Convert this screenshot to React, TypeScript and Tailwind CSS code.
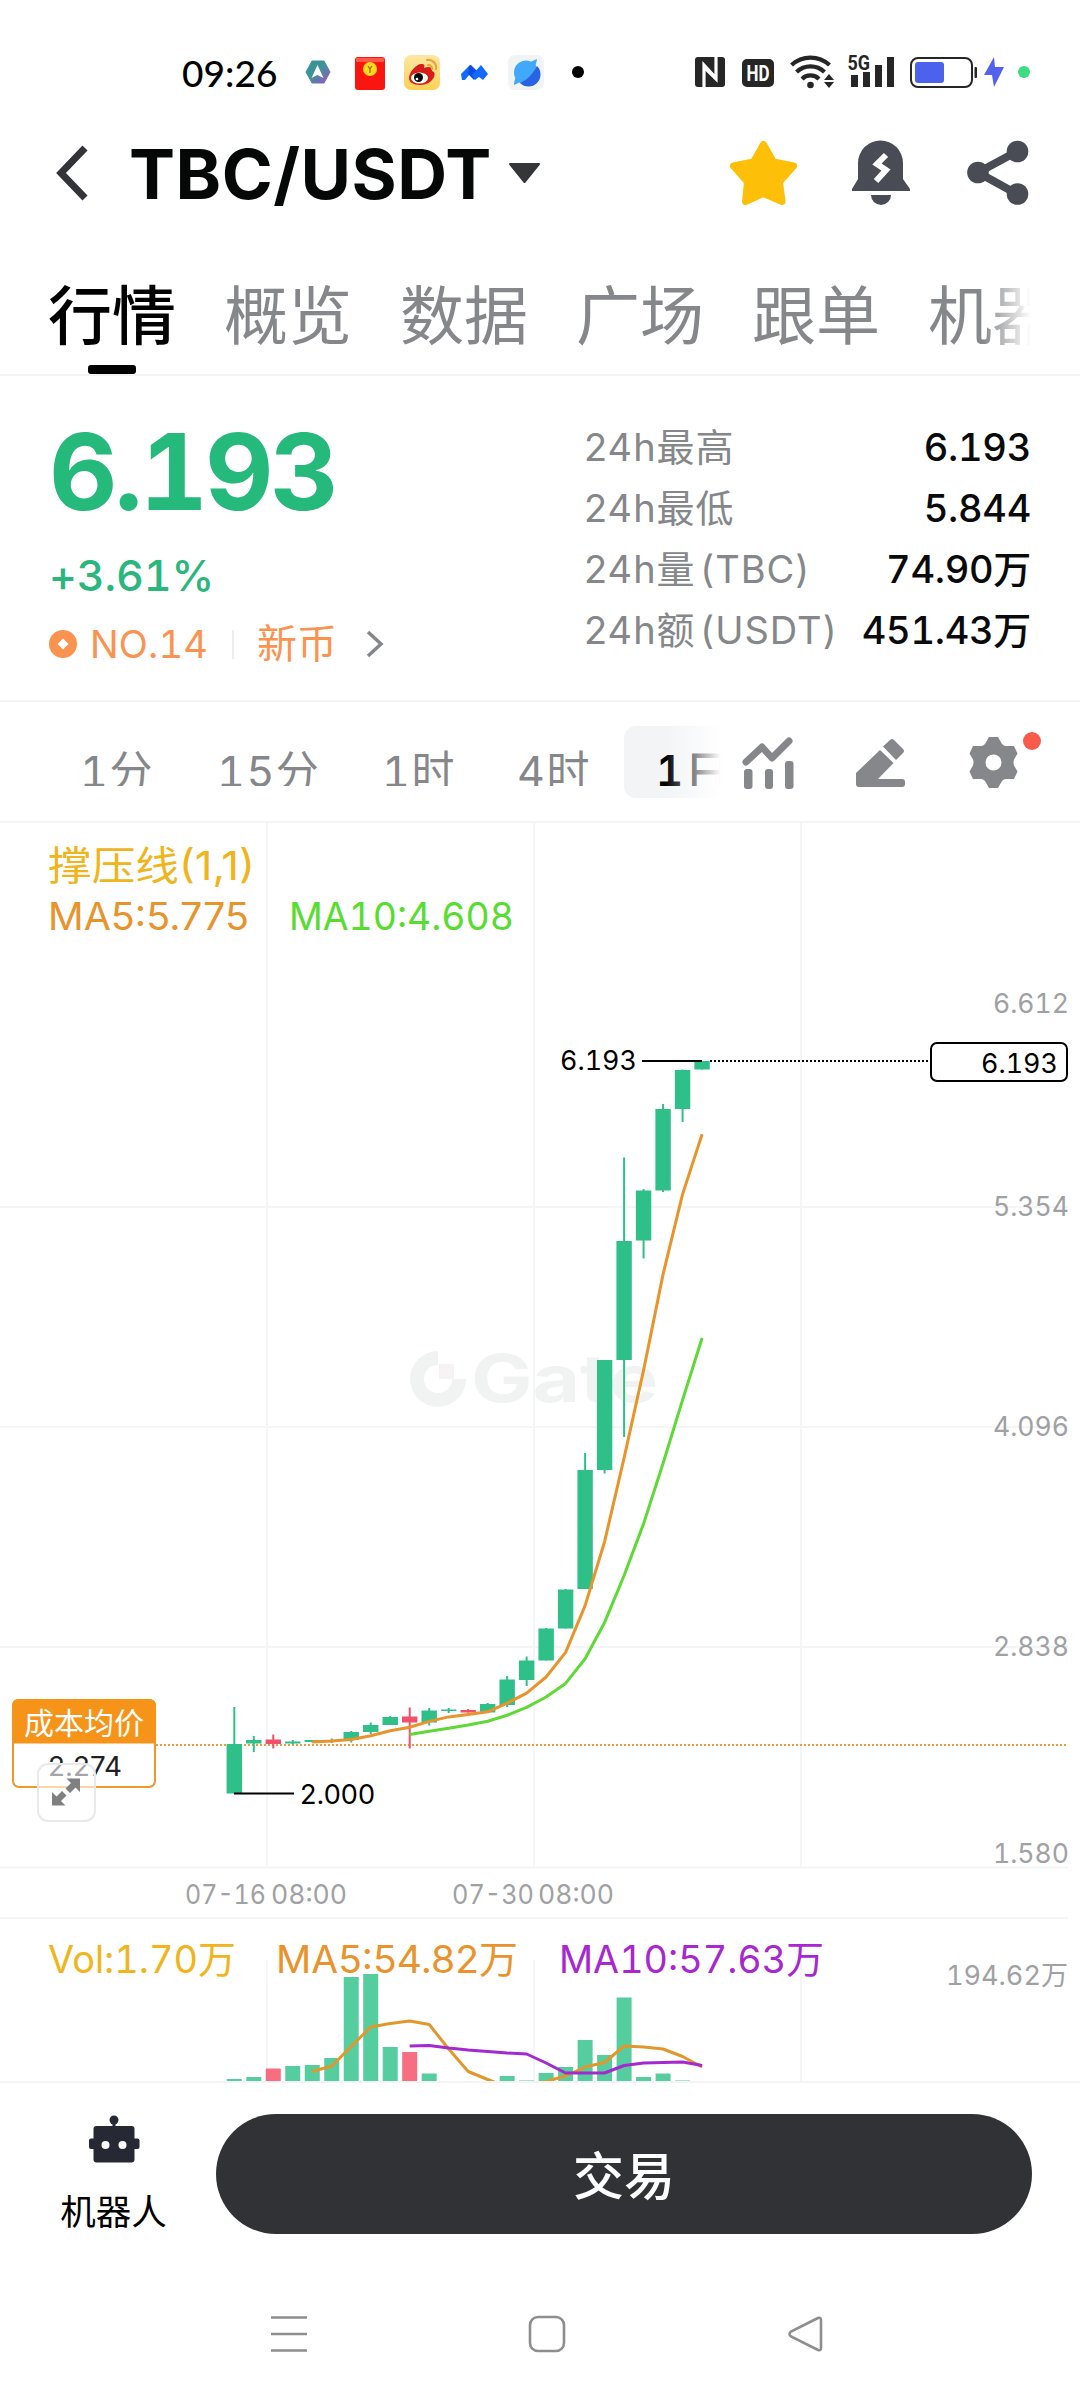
type Candle = [high: number, top: number, bottom: number, low: number, down?: boolean]

const tabs = ['行情', '概览', '数据', '广场', '跟单', '机器人']

const stats = [
  { label: '24h最高', value: '6.193' },
  { label: '24h最低', value: '5.844' },
  { label: '24h量 (TBC)', value: '74.90万' },
  { label: '24h额 (USDT)', value: '451.43万' },
]

const candles: Candle[] = [
  [1707, 1744, 1793.5, 1793.5],
  [1736, 1740, 1743.5, 1752],
  [1734.5, 1739.5, 1744, 1748.5, true],
  [1740, 1741.5, 1743.5, 1744.5],
  [1740, 1740, 1742, 1742.5],
  [1738.5, 1740, 1741.5, 1743],
  [1731, 1732, 1740, 1742.5],
  [1722.5, 1725, 1732, 1734],
  [1716, 1717, 1725, 1725],
  [1707.5, 1716.5, 1722.5, 1748.5, true],
  [1708, 1710.5, 1722.5, 1725.5],
  [1708, 1709.5, 1711, 1713],
  [1709, 1710, 1712.5, 1712.5, true],
  [1703, 1704, 1712.5, 1713],
  [1676, 1679.5, 1705, 1707],
  [1656.5, 1660.5, 1680, 1686],
  [1628, 1628.5, 1660.5, 1660.5],
  [1589, 1589.5, 1628.5, 1628.5],
  [1453, 1470, 1589, 1589],
  [1360, 1360, 1470, 1473.5],
  [1157.5, 1241, 1360, 1437],
  [1189, 1190.5, 1240.5, 1258.5],
  [1104, 1109, 1190.5, 1192],
  [1069.5, 1070, 1109, 1122],
  [1061, 1061, 1069.5, 1069.5],
]

const volumes = [
  2079, 2077, 2068.5, 2066, 2065, 2058, 1977, 1974, 2047, 2052, 2073.5, 2083, 2083, 2083, 2076, 2080.5, 2073, 2067,
  2040, 2055, 1997.5, 2077, 2073.5, 2080.5, 2083,
]
const volMa5 = [
  2071.5, 2066, 2046.5, 2027, 2023.5, 2021, 2024.5, 2049, 2071.5, 2079.5, 2087, 2085, 2081.5, 2076, 2067, 2062.5, 2046,
  2047, 2049, 2056.5, 2067,
]
const volMa10 = [
  2046, 2045.5, 2048, 2050, 2051.5, 2053, 2054, 2063, 2073, 2073, 2073, 2065.5, 2063, 2062.5, 2062, 2065.5,
]

const cx = (i: number) => 234.3 + i * 19.49

const closes = candles.map(([, top, bottom, , down]) => (down ? bottom : top))

const movingAverage = (n: number) =>
  closes.slice(n - 1).map((_, i) => closes.slice(i, i + n).reduce((a, b) => a + b, 0) / n)

const toPoints = (ys: number[], start: number) => ys.map((y, i) => `${cx(i + start).toFixed(1)},${y}`).join(' ')

function StatusBar() {
  return (
    <div className="flex h-[112px] items-center pt-8 pl-[182px] pr-[50px]">
      <span className="w-[122px] font-[Lato] text-[37px] leading-none font-medium tracking-[0.1px] text-black">09:26</span>
      <svg width="284" height="40" viewBox="304 52 284 40">
        <defs>
          <linearGradient id="hex" x1="0" y1="0" x2="1" y2="1">
            <stop offset="0.45" stopColor="#3b9598" />
            <stop offset="1" stopColor="#a04fc4" />
          </linearGradient>
          <linearGradient id="wb" x1="0" y1="0" x2="0" y2="1">
            <stop offset="0" stopColor="#fde7a6" />
            <stop offset="1" stopColor="#fbd253" />
          </linearGradient>
        </defs>
        <path d="M312 61h12l6 11-6 11h-12l-6-11z" fill="url(#hex)" stroke="url(#hex)" strokeLinejoin="round" />
        <path d="M317.500 65l6 13-6-3-6 3z" fill="#fff" />
        <rect x="355" y="57" width="30" height="33" rx="3" fill="#fb1510" />
        <rect x="356" y="58" width="28" height="4" rx="1" fill="#f9594b" />
        <circle cx="370" cy="69" r="7" fill="#ffdb1c" />
        <path d="M368 66l2 3 2-3M370 69v4" stroke="#a06b00" strokeWidth="1.300" fill="none" />
        <rect x="404" y="55" width="36" height="35" rx="7" fill="url(#wb)" />
        <path d="M409 78c0-6 8-15 13-14 2 0 3 1 2 4 5-2 9-1 8 3 3 1 3 3 2 6-2 5-8 8-14 8-7 0-11-3-11-7z" fill="#d71c1a" />
        <ellipse cx="419.500" cy="78" rx="8.500" ry="5.500" fill="#fff" />
        <circle cx="418.500" cy="77.500" r="4.500" fill="#0b0b0b" />
        <circle cx="417" cy="79" r="1.300" fill="#fff" />
        <path d="M427 60c6-1 10 4 9 9M428 65c3 0 4 1 4 4" stroke="#eaa53a" strokeWidth="2.200" fill="none" strokeLinecap="round" />
        <path d="M461 74l9-9 4 4-9 11h-3z" fill="#1467ff" />
        <path d="M469 66l2-1 8 8-5 7-6-6z" fill="#0c4fe0" />
        <path d="M472 75l9-10 7 9-5 6-4-3-4 3z" fill="#1467ff" />
        <rect x="508" y="55" width="36" height="35" rx="7" fill="#f2f3f5" />
        <circle cx="526" cy="72.500" r="12" fill="#41a9fb" />
        <path d="M537 66a12 12 0 0 1-17 17c7-3 13-9 17-17z" fill="#2763e3" />
        <path d="M514 85c0-6 4-15 12-21l11-5-1 5c-3 9-10 16-22 21z" fill="#41a9fb" />
        <circle cx="578" cy="72" r="6" fill="#000" />
      </svg>
      <svg className="ml-auto" width="346" height="40" viewBox="684 52 346 40">
        <rect x="695" y="57" width="30" height="30" rx="3" fill="#262626" />
        <path d="M704 87V65l11 12M716 57v22l-11-11" fill="none" stroke="#fff" strokeWidth="3.200" />
        <rect x="742" y="59" width="32" height="28" rx="5" fill="#262626" />
        <text x="746.500" y="81" textLength="23" lengthAdjust="spacingAndGlyphs" className="fill-white font-[Roboto] text-[22px] font-bold">
          HD
        </text>
        <g fill="none" stroke="#262626" strokeWidth="4.200">
          <path d="M791.500 65a28 28 0 0 1 38 0M796.500 72a20 20 0 0 1 28 0M802 79a12 12 0 0 1 17 0" />
        </g>
        <circle cx="810.500" cy="85" r="3.300" fill="#262626" />
        <path d="M829 74l5 6h-10zM829 88l5-6h-10z" fill="#262626" />
        <text x="847.500" y="70" textLength="22.500" lengthAdjust="spacingAndGlyphs" className="fill-[#262626] font-[Roboto] text-[21px] font-bold">
          5G
        </text>
        <path d="M851 75h7v12h-7zM863 72h7v15h-7zM875 65h7v22h-7zM887 57h7v30h-7z" fill="#262626" />
        <rect x="911" y="58" width="61" height="29" rx="7" fill="none" stroke="#262626" strokeWidth="2" />
        <rect x="915" y="62" width="29" height="21" rx="3" fill="#4c61ee" />
        <rect x="974.500" y="67" width="2.500" height="11" rx="1" fill="#262626" />
        <path d="M994 57l-10 18h8l2 12 10-20h-9z" fill="#5461ee" />
        <circle cx="1024" cy="72" r="6" fill="#3ddc84" />
      </svg>
    </div>
  )
}

function Header() {
  return (
    <header className="flex h-[122px] items-center pl-[54px] pr-[50px]">
      <svg width="36" height="60" viewBox="0 0 36 60">
        <path d="M31 5L7 30l24 25" fill="none" stroke="#333438" strokeWidth="7" />
      </svg>
      <h1 className="mt-[2px] ml-[39px] text-[69px] leading-none font-bold tracking-[0.5px] whitespace-nowrap text-[#060808]">TBC/USDT</h1>
      <svg className="ml-4" width="34" height="24" viewBox="0 0 34 24">
        <path d="M2 3h29L16.500 21z" fill="#35363a" stroke="#35363a" strokeWidth="2" strokeLinejoin="round" />
      </svg>
      <svg className="ml-auto" width="302" height="70" viewBox="728 138 302 70">
        <path
          d="M763.500 144.500l10 17.500 20 4-14 16 2.500 19.500-18.500-8-18 8 2-19.500-14-16 20-4z"
          fill="#fdbf07"
          stroke="#fdbf07"
          strokeWidth="7"
          strokeLinejoin="round"
        />
        <path d="M858 163a22.500 22.500 0 0 1 45 0v16l7 10v2h-58v-2l6-10z" fill="#4a4c55" />
        <path d="M871 195h20a10 10 0 0 1-20 0z" fill="#4a4c55" />
        <path d="M886 155l-9 9 9 6-10 11" fill="none" stroke="#fff" strokeWidth="6" />
        <path d="M1017 151.500l-39 21 39 21.500" fill="none" stroke="#4a4c55" strokeWidth="8" />
        <circle cx="1017.500" cy="151.500" r="10.800" fill="#4a4c55" />
        <circle cx="978" cy="172.500" r="10.800" fill="#4a4c55" />
        <circle cx="1017.500" cy="194" r="10.800" fill="#4a4c55" />
      </svg>
    </header>
  )
}

function Tabs() {
  return (
    <nav className="h-[142px] border-b-2 border-[#f4f4f5] pr-[49px] pl-12">
      <div className="relative flex h-[140px] gap-12 overflow-hidden pt-[45px] text-[64px] leading-[74px] whitespace-nowrap text-[#85878a]">
        {tabs.map((tab, i) => (
          <div key={tab} className={i === 0 ? 'flex flex-col items-center font-medium text-black' : 'font-normal'}>
            {tab}
            {i === 0 && <span className="mt-3 h-[9px] w-12 rounded-[3px] bg-black" />}
          </div>
        ))}
        <div className="absolute top-0 right-0 h-full w-12 bg-gradient-to-r from-transparent to-white" />
      </div>
    </nav>
  )
}

function Quote() {
  return (
    <section className="flex h-[326px] justify-between border-b-2 border-[#f4f4f5] pt-[41px] pr-[49px] pl-[49px]">
      <div className="pt-px">
        <div className="text-[106px] leading-[108px] font-bold tracking-[-3.2px] tabular-nums text-[#25b97c]">6.193</div>
        <div className="mt-[23px] text-[43px] leading-[52px] font-medium tracking-[-0.1px] tabular-nums text-[#2bb67d]">+3.61%</div>
        <div className="mt-[20px] flex h-[46px] items-center text-[#fb9350]">
          <svg width="28" height="28" viewBox="0 0 28 28">
            <circle cx="14" cy="14" r="14" fill="#fb9350" />
            <path d="M14 8.500l5.500 5.500-5.500 5.500L8.500 14z" fill="#fff" />
          </svg>
          <span className="ml-[13px] w-[142px] text-[38px] tracking-[0.2px] tabular-nums">NO.14</span>
          <span className="h-[29px] w-[2px] bg-[#eeeeee]" />
          <span className="ml-[23px] text-[40px]">新币</span>
          <svg className="ml-[28px]" width="20" height="30" viewBox="0 0 20 30">
            <path d="M3 3l13 12L3 27" fill="none" stroke="#85878a" strokeWidth="3.500" />
          </svg>
        </div>
      </div>
      <dl className="w-[447px] text-[38px] leading-[61px] whitespace-nowrap">
        {stats.map(s => (
          <div key={s.label} className="flex h-[61px] justify-between">
            <dt className="tracking-[1px] text-[#85878a] [word-spacing:-7px]">{s.label}</dt>
            <dd className="font-medium tracking-[-0.3px] tabular-nums text-[#0a0a0a]">{s.value}</dd>
          </div>
        ))}
      </dl>
    </section>
  )
}

function Intervals() {
  return (
    <section className="flex h-[121px] border-b-2 border-[#f4f4f5] text-[43px] text-[#85878a] tabular-nums">
      <div className="relative flex h-[98px] w-[721px] overflow-hidden pt-[24px] whitespace-nowrap">
        <div className="flex h-[60px] w-[624px] shrink-0 overflow-hidden leading-[91px] tracking-[1.5px]">
          <span className="ml-[80px] w-[137px]">1分</span>
          <span className="w-[165px]">15分</span>
          <span className="w-[135px]">1时</span>
          <span>4时</span>
        </div>
        <div className="h-[72px] w-[130px] shrink-0 rounded-xl bg-[#f2f4f6]">
          <div className="flex h-[60px] overflow-hidden pl-[32px] text-black">
            <span className="w-[28px] text-[42px] leading-[90px] font-semibold">1</span>
            <span className="text-[48px] leading-[96px] font-medium">日</span>
          </div>
        </div>
        <div className="absolute top-0 right-0 h-full w-[56px] bg-gradient-to-r from-transparent to-white" />
      </div>
      <svg width="359" height="100" viewBox="721 702 359 100" fill="#85878a">
        <path d="M746 762l16-15 10 11 17-17" fill="none" stroke="#85878a" strokeWidth="7" strokeLinecap="round" strokeLinejoin="round" />
        <rect x="744" y="769" width="8.500" height="20" rx="3" />
        <rect x="765" y="769" width="8" height="20" rx="3" />
        <rect x="785" y="761" width="8.500" height="28" rx="3" />
        <path d="M880 750l13.500 13L878 779h24a3 3 0 0 1 3 3v2a3 3 0 0 1-3 3h-43a3 3 0 0 1-3-3v-11z" />
        <path d="M883 746.500l7-6.500q2-2 4 0l9 9q2 2 0 4l-7 7z" />
        <path
          fillRule="evenodd"
          d="M989 737h9l4 7q2 2.500 5 2h7l3.500 7.500-3.500 6q-1 3 0 6l3.500 6-3.500 7.500h-7q-3-.5-5 2l-4 7h-9l-4-7q-2-2.500-5-2h-7l-3.500-7.500 3.500-6q1-3 0-6l-3.500-6 3.500-7.500h7q3 .5 5-2zM993.500 754.500a8 8 0 1 0 0 16 8 8 0 1 0 0-16z"
        />
        <circle cx="1032" cy="741" r="9" fill="#f85a4c" />
      </svg>
    </section>
  )
}

interface LabelProps {
  x: number
  y: number
  w: number
  cls: string
  children: string
}

function Label({ x, y, w, cls, children }: LabelProps) {
  return (
    <text x={x} y={y} textLength={w} lengthAdjust="spacingAndGlyphs" className={cls}>
      {children}
    </text>
  )
}

function Chart() {
  const axis = 'text-[27px] tabular-nums fill-[#9fa1a4]'
  return (
    <svg className="block" width="1080" height="1258" viewBox="0 823 1080 1258">
      <g stroke="#f4f5f5" strokeWidth="2">
        <path d="M267 823V1867M534 823V1867M801 823V1867M267 1960V2081M534 1960V2081M801 1960V2081" />
        <path d="M0 1207H1068M0 1427H1068M0 1647H1068M0 1867.500H1068M0 1918H1068" />
      </g>

      {/* Watermark */}
      <path d="M438 1351a28 28 0 1 0 28 28h-14a14 14 0 1 1-14-14z" fill="#f1f3f3" />
      <rect x="439" y="1364" width="15" height="15" fill="#f5f3f3" />
      <Label x={471} y={1402} w={187} cls="text-[66px] font-bold fill-[#f1f3f3]">Gate</Label>

      <Label x={48} y={880} w={207} cls="text-[40px] fill-[#f0b41c]">撑压线(1,1)</Label>
      <Label x={48} y={930} w={201} cls="text-[38px] fill-[#e9932c]">MA5:5.775</Label>
      <Label x={289} y={930} w={225} cls="text-[38px] tabular-nums fill-[#57dd30]">MA10:4.608</Label>

      <path d="M156 1745H1068" stroke="#e3a04a" strokeWidth="2" strokeDasharray="2 2" />

      {candles.map(([high, top, bottom, low, down], i) => (
        <g key={i} fill={down ? '#f0506a' : '#2ec088'}>
          <rect x={cx(i) - 1} y={high} width={2} height={low - high} />
          <rect x={cx(i) - 7.7} y={top} width={15.4} height={bottom - top} />
        </g>
      ))}
      <g fill="none" strokeWidth="3" strokeLinejoin="round">
        <polyline points={toPoints(movingAverage(5), 4)} stroke="#e9932c" />
        <polyline points={toPoints(movingAverage(10), 9)} stroke="#5ed936" />
      </g>

      <path d="M234 1793.500H294M642 1061H702" stroke="#000" strokeWidth="2" />
      <Label x={300} y={1804} w={75} cls="text-[27px] fill-black">2.000</Label>
      <Label x={560} y={1070} w={77} cls="text-[27px] tabular-nums fill-black">6.193</Label>
      <path d="M710 1061H930" stroke="#000" strokeWidth="2" strokeDasharray="2 2" />
      <rect x="931" y="1043" width="136" height="38" rx="6" fill="#fff" stroke="#000" strokeWidth="2" />
      <Label x={981} y={1073} w={77} cls="text-[27px] tabular-nums fill-black">6.193</Label>

      <Label x={993} y={1013} w={76} cls={axis}>6.612</Label>
      <Label x={993} y={1216} w={76} cls={axis}>5.354</Label>
      <Label x={993} y={1436} w={76} cls={axis}>4.096</Label>
      <Label x={993} y={1656} w={76} cls={axis}>2.838</Label>
      <Label x={993} y={1863} w={76} cls={axis}>1.580</Label>
      <Label x={185} y={1904} w={81} cls={axis}>07-16</Label>
      <Label x={271} y={1904} w={76} cls={axis}>08:00</Label>
      <Label x={452} y={1904} w={82} cls={axis}>07-30</Label>
      <Label x={538} y={1904} w={76} cls={axis}>08:00</Label>

      {/* Average cost tag */}
      <rect x="13" y="1700" width="142" height="87" rx="6" fill="#fff" stroke="#f3972a" strokeWidth="2" />
      <path d="M12 1743.500V1706q0-7 7-7h130q7 0 7 7v37.500z" fill="#f69319" />
      <Label x={24} y={1734} w={120} cls="text-[30px] fill-white">成本均价</Label>
      <Label x={48} y={1776} w={74} cls="text-[27px] fill-[#1f2024]">2.274</Label>
      <rect x="38" y="1764" width="57" height="57" rx="10" fill="#fff" fillOpacity="0.6" stroke="#e9e9ea" strokeWidth="2" />
      <path d="M66.500 1778.500H80v13.500l-4.500-4.500-5.500 5.500-4.500-4.500 5.500-5.500zM52 1792l4.500 4.500 5.500-5.500 4.500 4.500-5.500 5.500 4.500 4.500H52z" fill="#808080" />

      {/* Volume */}
      {volumes.map((y, i) => (
        <rect key={i} x={cx(i) - 7.5} y={y} width={15} height={Math.max(0, 2081 - y)} fill={candles[i][4] ? '#f66e80' : '#56cd9f'} />
      ))}
      <g fill="none" strokeWidth="3" strokeLinejoin="round">
        <polyline points={toPoints(volMa5, 4)} stroke="#e0982c" />
        <polyline points={toPoints(volMa10, 9)} stroke="#a429cf" />
      </g>
      <Label x={48} y={1973} w={188} cls="text-[38px] tabular-nums fill-[#f0b41c]">Vol:1.70万</Label>
      <Label x={276} y={1973} w={242} cls="text-[38px] fill-[#e9932c]">MA5:54.82万</Label>
      <Label x={559} y={1973} w={265} cls="text-[38px] tabular-nums fill-[#a827cf]">MA10:57.63万</Label>
      <Label x={946} y={1985} w={122} cls={axis}>194.62万</Label>
    </svg>
  )
}

function BottomBar() {
  return (
    <footer className="flex h-[207px] items-start border-t-2 border-[#f4f4f5] pr-[48px] pl-[60px]">
      <div className="flex w-[107px] flex-col items-center pt-[32px]">
        <svg width="52" height="48" viewBox="88 2115 52 48" fill="#262833">
          <circle cx="114" cy="2120" r="4.500" />
          <path d="M112.500 2120h3v8h-3z" />
          <rect x="93.500" y="2126" width="41" height="36.500" rx="3" />
          <rect x="89" y="2138.500" width="50.500" height="10.500" rx="2" />
          <circle cx="105.500" cy="2145" r="4" fill="#fff" />
          <circle cx="122.500" cy="2145" r="4" fill="#fff" />
        </svg>
        <span className="mt-[25px] text-[35.500px] leading-[50px] whitespace-nowrap text-black">机器人</span>
      </div>
      <button className="mt-[31px] ml-[49px] h-[120px] flex-1 rounded-full bg-[#313235] pt-[6px] text-[51px] font-medium text-white">交易</button>
    </footer>
  )
}

function NavBar() {
  return (
    <div className="flex h-[92px] items-center pl-[269px]">
      <svg width="556" height="44" viewBox="269 2312 556 44" fill="none" stroke="#8e8e8e" strokeWidth="2.6">
        <path d="M271 2317.500h36M271 2334h36M271 2350.500h36" />
        <rect x="530" y="2317" width="34" height="34" rx="8" />
        <path d="M818 2318l-27 13.500q-3 2.500 0 5l27 13.500q3 1 3-2v-28q0-3-3-2z" />
      </svg>
    </div>
  )
}

export default function App() {
  return (
    <div className="h-[2400px] w-[1080px] overflow-hidden bg-white font-[Inter,'Noto_Sans_CJK_SC',sans-serif]">
      <StatusBar />
      <Header />
      <Tabs />
      <Quote />
      <Intervals />
      <Chart />
      <BottomBar />
      <NavBar />
    </div>
  )
}
